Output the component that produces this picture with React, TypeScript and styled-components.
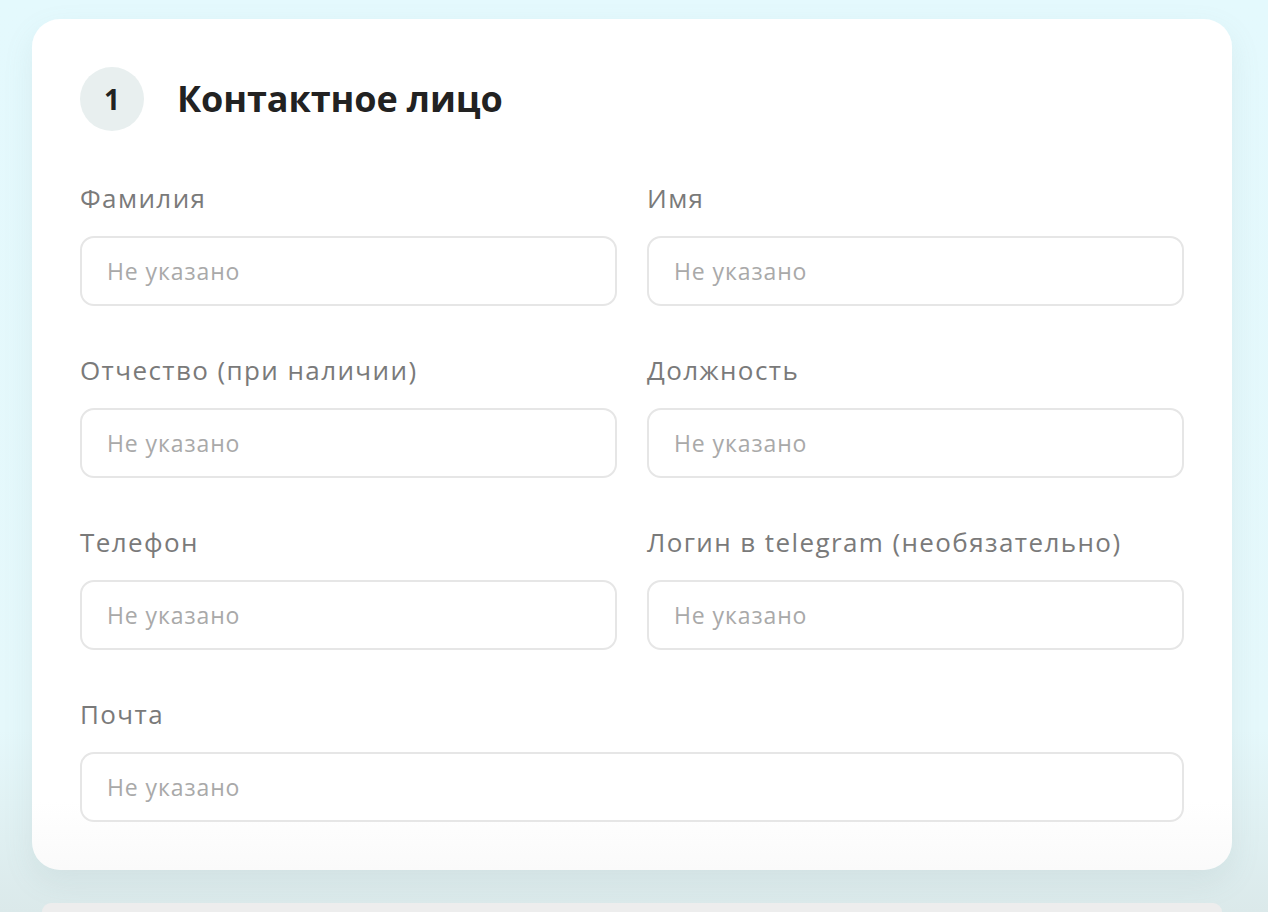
import React from "react";
import styled, { createGlobalStyle } from "styled-components";

const Global = createGlobalStyle`
  html, body { margin: 0; padding: 0; }
  body {
    background: linear-gradient(180deg, #e4f9fd 0%, #e5f8fb 80%, #dbe9ea 100%);
    min-height: 912px;
    font-family: "Open Sans", "Noto Sans", sans-serif;
    overflow: hidden;
  }
`;

const Page = styled.div`
  padding: 19px 36px 0 32px;
  display: flex;
  flex-direction: column;
  gap: 33px;
  height: 912px;
  box-sizing: border-box;
`;

const Card = styled.section`
  width: 1200px;
  box-sizing: border-box;
  background: linear-gradient(180deg, #ffffff 0%, #ffffff 92%, #fafafa 100%);
  border-radius: 28px;
  padding: 48px;
  box-shadow: 0 12px 30px rgba(120, 150, 150, 0.12);
`;

const NextCard = styled.div`
  margin: 0 10px 0 10px;
  width: 1180px;
  height: 40px;
  background: #ededed;
  border-radius: 22px 22px 0 0;
`;

const Header = styled.div`
  display: flex;
  align-items: center;
  gap: 33px;
  margin-bottom: 52px;
`;

const StepCircle = styled.div`
  width: 64px;
  height: 64px;
  border-radius: 50%;
  background: #e8efef;
  display: flex;
  align-items: center;
  justify-content: center;
  font-size: 28px;
  font-weight: 700;
  color: #222;
`;

const Title = styled.h2`
  margin: 0;
  font-size: 36px;
  line-height: 44px;
  font-weight: 700;
  color: #222;
  letter-spacing: -0.1px;
`;

const Grid = styled.div`
  display: grid;
  grid-template-columns: 537px 537px;
  column-gap: 30px;
  row-gap: 49px;
`;

const Field = styled.label<{ $wide?: boolean }>`
  display: flex;
  flex-direction: column;
  gap: 21px;
  grid-column: ${(p) => (p.$wide ? "1 / -1" : "auto")};
`;

const Label = styled.span`
  font-size: 26px;
  line-height: 32px;
  color: #7a7a7a;
  letter-spacing: 1.4px;
  margin-top: -1px;
  margin-bottom: 1px;
`;

const Input = styled.input`
  height: 70px;
  box-sizing: border-box;
  border: 2px solid #e6e6e6;
  border-radius: 14px;
  padding: 0 25px;
  font-family: inherit;
  font-size: 23px;
  letter-spacing: 0.9px;
  color: #222;
  background: #fff;
  outline: none;
  &::placeholder {
    color: #a9a9a9;
  }
`;

const fields: { label: string; wide?: boolean }[] = [
  { label: "Фамилия" },
  { label: "Имя" },
  { label: "Отчество (при наличии)" },
  { label: "Должность" },
  { label: "Телефон" },
  { label: "Логин в telegram (необязательно)" },
  { label: "Почта", wide: true },
];

export default function App() {
  return (
    <>
      <Global />
      <Page>
        <Card>
          <Header>
            <StepCircle>1</StepCircle>
            <Title>Контактное лицо</Title>
          </Header>
          <Grid>
            {fields.map((f) => (
              <Field key={f.label} $wide={f.wide}>
                <Label>{f.label}</Label>
                <Input placeholder="Не указано" />
              </Field>
            ))}
          </Grid>
        </Card>
        <NextCard />
      </Page>
    </>
  );
}
